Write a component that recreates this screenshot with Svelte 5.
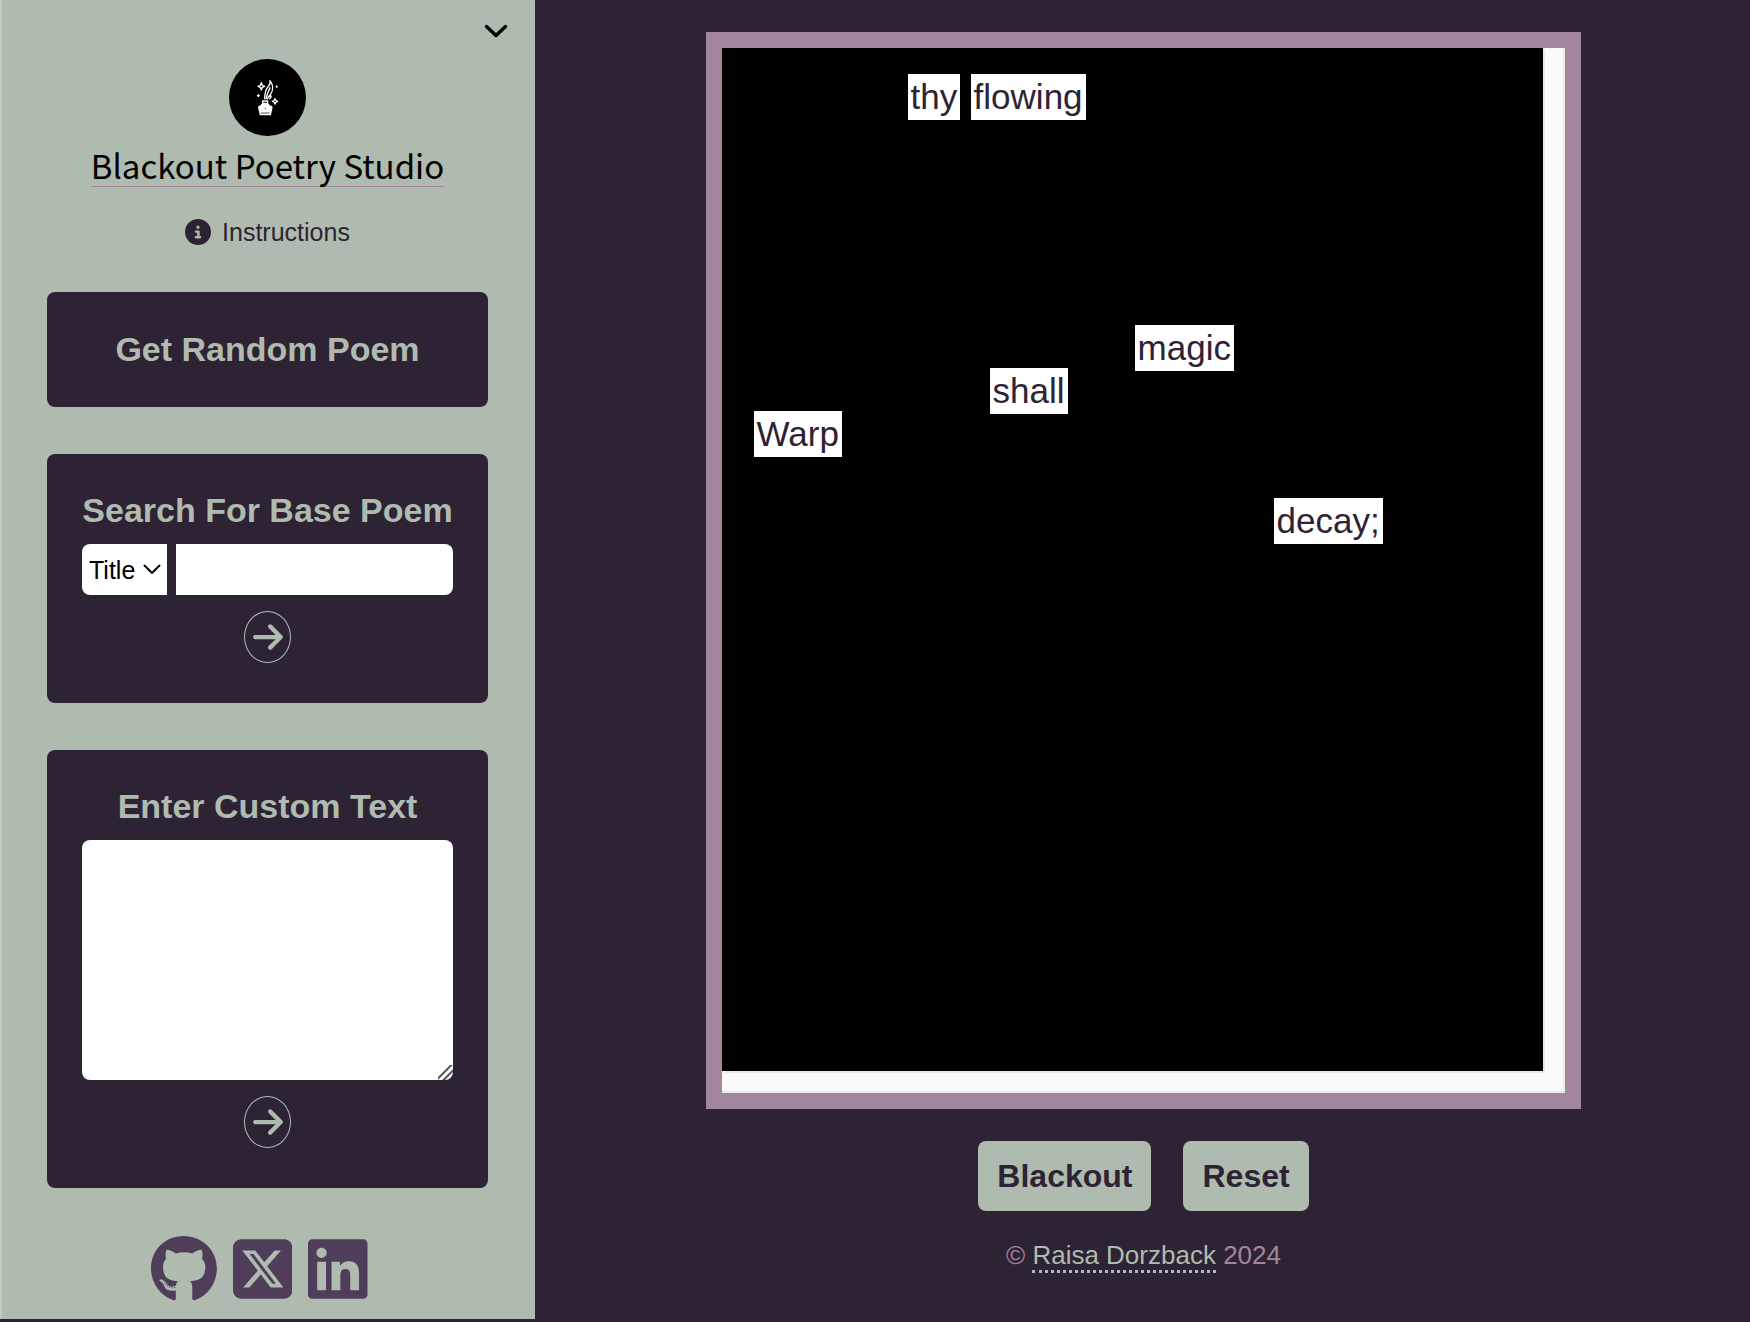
<script>
  const words = [
    { text: 'thy', x: 186, y: 26 },
    { text: 'flowing', x: 249, y: 26 },
    { text: 'magic', x: 413, y: 277 },
    { text: 'shall', x: 268, y: 320 },
    { text: 'Warp', x: 32, y: 363 },
    { text: 'decay;', x: 552, y: 450 }
  ];
  let field = $state('Title');
  let query = $state('');
  let custom = $state('');
</script>

{#snippet arrow()}
  <svg class="arrow" viewBox="0 0 448 512" aria-hidden="true"><path d="M438.6 278.6c12.5-12.5 12.5-32.8 0-45.3l-160-160c-12.5-12.5-32.8-12.5-45.3 0s-12.5 32.8 0 45.3L338.8 224 32 224c-17.7 0-32 14.3-32 32s14.3 32 32 32l306.7 0L233.4 393.4c-12.5 12.5-12.5 32.8 0 45.3s32.8 12.5 45.3 0l160-160z" /></svg>
{/snippet}

<div class="page">
  <aside class="sidebar">
    <button class="collapse" type="button" aria-label="Collapse menu">
      <svg viewBox="0 0 24 14" aria-hidden="true"><path d="M2.5 2.5 12 11.500 21.500 2.500" /></svg>
    </button>

    <header class="brand">
      <svg class="logo" viewBox="57 27 231 231" aria-hidden="true">
        <circle cx="172.500" cy="142.500" r="115.500" />
        <g class="line">
          <path d="M164 148C164 130 166 118 176 108C181 103 181 97 180 92C190 105 190 121 182 132C180 138 174 141 170 148" />
          <path d="M168 147C170 132 176 122 181 112M174 140l9-3M183 137c1 4-2 8-6 10" />
          <path d="M158 153h15v7h-15z" />
          <path d="M154 98c1 8 3 10 10 11c-7 1-9 3-10 11c-1-8-3-10-10-11c7-1 9-3 10-11z" />
          <path d="M195 146c1 5 3 7 8 8c-5 1-7 3-8 8c-1-5-3-7-8-8c5-1 7-3 8-8z" />
        </g>
        <g class="ink">
          <path d="M154 161h23l2 5c8 1 10 4 8 10l-4 18q-1 2-4 2h-26q-3 0-4-2l-4-18c-2-6 0-9 7-10z" />
          <path d="M200 106l4 4-4 4-4-4zM145 132l5 5-5 5-5-5z" />
        </g>
        <path class="cut" d="M152 189h27M166 173v5" />
      </svg>
      <h1>Blackout Poetry Studio</h1>
    </header>

    <button class="instructions" type="button">
      <svg viewBox="0 0 512 512" aria-hidden="true"><path d="M256 512A256 256 0 1 0 256 0a256 256 0 1 0 0 512zM216 336h24V272H216c-13.300 0-24-10.700-24-24s10.700-24 24-24h48c13.300 0 24 10.700 24 24v88h8c13.300 0 24 10.700 24 24s-10.700 24-24 24H216c-13.300 0-24-10.700-24-24s10.700-24 24-24zm40-208a32 32 0 1 1 0 64 32 32 0 1 1 0-64z" /></svg>
      Instructions
    </button>

    <div class="cards">
      <button class="card random" type="button">Get Random Poem</button>

      <form class="card" onsubmit={(e) => e.preventDefault()}>
        <label class="heading" for="query">Search For Base Poem</label>
        <div class="search">
          <div class="picker">
            <select aria-label="Search by" bind:value={field}>
              <option>Title</option>
              <option>Author</option>
            </select>
            <svg viewBox="0 0 18 11" aria-hidden="true"><path d="M1.500 1.500 9 9 16.500 1.500" /></svg>
          </div>
          <input id="query" type="text" bind:value={query} />
        </div>
        <button class="go" type="submit" aria-label="Search">{@render arrow()}</button>
      </form>

      <form class="card" onsubmit={(e) => e.preventDefault()}>
        <label class="heading" for="custom">Enter Custom Text</label>
        <textarea id="custom" bind:value={custom}></textarea>
        <button class="go" type="submit" aria-label="Use text">{@render arrow()}</button>
      </form>
    </div>

    <nav class="social" aria-label="Social links">
      <a href="#github" aria-label="GitHub"><svg viewBox="0 0 496 512"><path d="M165.900 397.400c0 2-2.300 3.600-5.200 3.600-3.300.3-5.600-1.300-5.600-3.600 0-2 2.300-3.600 5.200-3.600 3-.3 5.600 1.300 5.600 3.600zm-31.100-4.500c-.7 2 1.300 4.300 4.300 4.900 2.600 1 5.600 0 6.200-2s-1.300-4.300-4.300-5.200c-2.600-.7-5.500.3-6.200 2.300zm44.200-1.700c-2.900.7-4.900 2.600-4.600 4.900.3 2 2.900 3.300 5.900 2.600 2.900-.7 4.900-2.600 4.600-4.600-.3-1.900-3-3.200-5.900-2.900zM244.800 8C106.100 8 0 113.300 0 252c0 110.900 69.800 205.800 169.500 239.200 12.800 2.300 17.300-5.600 17.300-12.100 0-6.200-.3-40.400-.3-61.400 0 0-70 15-84.700-29.800 0 0-11.400-29.100-27.800-36.600 0 0-22.900-15.700 1.600-15.400 0 0 24.900 2 38.600 25.800 21.900 38.600 58.600 27.500 72.900 20.900 2.300-16 8.800-27.100 16-33.700-55.900-6.200-112.300-14.300-112.300-110.500 0-27.500 7.600-41.300 23.600-58.900-2.600-6.500-11.100-33.300 2.600-67.900 20.900-6.500 69 27 69 27 20-5.600 41.500-8.500 62.800-8.500s42.800 2.900 62.800 8.500c0 0 48.100-33.600 69-27 13.700 34.700 5.200 61.400 2.600 67.900 16 17.700 25.800 31.500 25.800 58.900 0 96.500-58.900 104.200-114.800 110.500 9.200 7.900 17 22.900 17 46.400 0 33.700-.3 75.400-.3 83.600 0 6.500 4.600 14.400 17.300 12.100C428.200 457.800 496 362.900 496 252 496 113.300 383.500 8 244.800 8zM97.200 352.900c-1.300 1-1 3.300.7 5.200 1.600 1.600 3.900 2.300 5.200 1 1.300-1 1-3.300-.7-5.200-1.600-1.600-3.900-2.300-5.200-1zm-10.800-8.100c-.7 1.300.3 2.900 2.300 3.900 1.600 1 3.600.7 4.300-.7.7-1.300-.3-2.900-2.300-3.900-2-.6-3.600-.3-4.300.7zm32.400 35.600c-1.600 1.300-1 4.300 1.300 6.200 2.300 2.300 5.200 2.600 6.500 1 1.300-1.300.7-4.300-1.300-6.200-2.200-2.300-5.200-2.600-6.500-1zm-11.400-14.700c-1.600 1-1.600 3.600 0 5.900 1.600 2.300 4.300 3.300 5.600 2.300 1.600-1.300 1.600-3.900 0-6.200-1.400-2.300-4-3.300-5.600-2z" /></svg></a>
      <a href="#x" aria-label="X"><svg viewBox="0 0 448 512"><path d="M64 32C28.700 32 0 60.700 0 96V416c0 35.300 28.700 64 64 64H384c35.300 0 64-28.700 64-64V96c0-35.300-28.700-64-64-64H64zm297.100 84L257.300 234.600 379.400 396H283.800L209 298.100 123.300 396H75.800l111-126.900L69.700 116h98l67.700 89.500L313.600 116h47.500zM323.300 367.600L153.400 142.900H125.100L296.900 367.600h26.300z" /></svg></a>
      <a href="#linkedin" aria-label="LinkedIn"><svg viewBox="0 0 448 512"><path d="M416 32H31.900C14.300 32 0 46.500 0 64.300v383.400C0 465.500 14.300 480 31.900 480H416c17.600 0 32-14.500 32-32.300V64.300c0-17.800-14.400-32.300-32-32.300zM135.400 416H69V202.200h66.500V416zm-33.200-243c-21.300 0-38.500-17.300-38.500-38.500S80.900 96 102.200 96c21.200 0 38.500 17.300 38.500 38.500 0 21.300-17.200 38.500-38.500 38.500zm282.100 243h-66.400V312c0-24.800-.5-56.700-34.500-56.700-34.600 0-39.900 27-39.900 54.900V416h-66.400V202.200h63.700v29.200h.9c8.900-16.800 30.600-34.500 62.900-34.500 67.200 0 79.700 44.300 79.700 101.900V416z" /></svg></a>
    </nav>
  </aside>

  <main>
    <section class="frame" aria-label="Poem">
      <div class="poem">
        {#each words as word}
          <span class="word" style="left: {word.x}px; top: {word.y}px">{word.text}</span>
        {/each}
      </div>
    </section>
    <div class="actions">
      <button type="button">Blackout</button>
      <button type="button">Reset</button>
    </div>
    <footer>© <a href="#author">Raisa Dorzback</a> 2024</footer>
  </main>
</div>

<style>
  :global(body) {
    background: #2e2334;
    font-family: "Liberation Sans", Arial, sans-serif;
    font-size: 25px;
    line-height: 30px;
  }
  * { box-sizing: border-box; }
  button, select, input, textarea { font: inherit; margin: 0; border: 0; }
  button { cursor: pointer; }
  svg { display: block; }
  .page {
    display: grid;
    grid-template-columns: 535fr 1215fr;
    min-height: 100vh;
    padding-bottom: 3px;
  }
  .sidebar {
    display: flex;
    flex-direction: column;
    align-items: center;
    background: #afbbae;
    border-left: 2px solid #bfc9be;
    padding: 16px 47px 16px 45px;
  }
  .collapse {
    align-self: flex-end;
    margin-right: -26px;
    padding: 8px 6px;
    height: 30px;
    background: none;
  }
  .collapse svg { width: 24px; height: 14px; }
  .collapse path, .picker path { fill: none; stroke: #000; stroke-linecap: round; stroke-linejoin: round; }
  .collapse path { stroke-width: 3.5; }
  .brand { display: flex; flex-direction: column; align-items: center; margin-top: 13px; }
  .logo { width: 77px; height: 77px; }
  .logo .line { fill: none; stroke: #fff; stroke-width: 4; stroke-linejoin: round; }
  .logo .ink { fill: #fff; }
  .logo .cut { fill: none; stroke: #000; stroke-width: 2; }
  h1 {
    margin: 8px 0 0;
    border-bottom: 1px solid #a2869b;
    color: #000;
    font: 400 33px/42px "Noto Sans CJK SC", sans-serif;
    white-space: nowrap;
  }
  .instructions {
    display: flex;
    align-items: center;
    gap: 11px;
    margin-top: 30px;
    padding: 0;
    background: none;
    color: #2e2334;
  }
  .instructions svg { width: 26px; height: 26px; fill: #2e2334; }
  .cards { display: flex; flex-direction: column; gap: 47px; width: 100%; margin-top: 45px; }
  .card {
    display: flex;
    flex-direction: column;
    align-items: center;
    width: 100%;
    padding: 36px 35px 40px;
    border-radius: 8px;
    background: #2e2334;
    color: #afbbae;
  }
  .random, .heading { font-size: 34px; font-weight: 700; line-height: 40px; white-space: nowrap; }
  .random { padding: 37px 35px 38px; }
  .search { display: grid; grid-template-columns: 85px 1fr; gap: 9px; width: 100%; margin: 14px 0 16px; }
  .picker { position: relative; }
  select, input {
    width: 100%;
    height: 51px;
    background: #fff;
    color: #000;
    appearance: none;
    border-radius: 8px 0 0 8px;
    padding: 0 7px;
  }
  input { border-radius: 0 8px 8px 0; }
  .picker svg { position: absolute; right: 6px; top: 20px; width: 18px; height: 11px; pointer-events: none; }
  .picker path { stroke-width: 2; }
  textarea {
    width: 100%;
    height: 240px;
    margin: 14px 0 16px;
    border-radius: 8px;
    background: #fff;
    padding: 8px;
    resize: both;
  }
  textarea::-webkit-resizer {
    background: linear-gradient(135deg, transparent 8px, #555 9px 10px, transparent 11px 13px, #555 14px 15px, transparent 16px);
  }
  .go {
    display: grid;
    place-items: center;
    width: 47px;
    height: 52px;
    padding: 0;
    border: 1px solid #afbbae;
    border-radius: 50%;
    background: none;
  }
  .arrow { width: 30px; height: 34px; fill: #afbbae; }
  .social { display: flex; margin-top: 47px; }
  .social a { margin-right: 16px; }
  .social svg { height: 68px; fill: #503d5a; }
  main { display: flex; flex-direction: column; align-items: center; padding: 32px 0 16px 2px; }
  .frame {
    width: 72.2%;
    border: 16px solid #a2869b;
    background: #fafafa;
    box-shadow: inset -2px -2px #e9ebe9;
    padding: 0 22px 22px 0;
  }
  .poem {
    position: relative;
    min-height: 1023px;
    background: #000;
    box-shadow: 2px 2px #e9e9e9;
  }
  .word {
    position: absolute;
    padding: 3px;
    background: #fff;
    color: #2e2334;
    font-size: 35px;
    line-height: 40px;
  }
  .actions { display: flex; gap: 32px; margin: 32px 0 28px; }
  .actions button {
    padding: 16px 19px;
    border-radius: 8px;
    background: #afbbae;
    color: #2e2334;
    font-size: 32px;
    font-weight: 700;
    line-height: 38px;
  }
  footer { color: #a2869b; font-size: 26px; line-height: 32px; }
  footer a { color: #afbbae; text-decoration: none; border-bottom: 3px dotted #afbbae; }
</style>
